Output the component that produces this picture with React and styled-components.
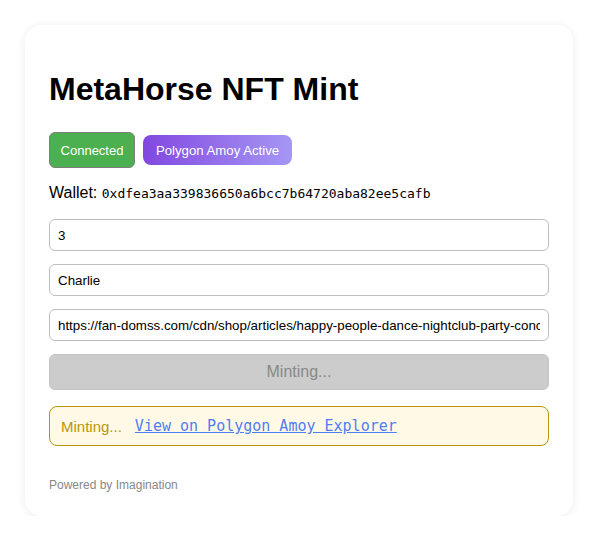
import React from "react";
import styled, { createGlobalStyle } from "styled-components";

const Global = createGlobalStyle`
  html, body { margin: 0; padding: 0; background: #ffffff; }
  body { font-family: "Liberation Sans", Arial, sans-serif; color: #000; }
  * { box-sizing: border-box; }
`;

const Page = styled.div`
  padding: 25px 0 0 25px;
`;

const Card = styled.div`
  width: 548px;
  padding: 24px;
  background: #fff;
  border-radius: 16px;
  box-shadow: 0 1px 10px rgba(0, 0, 0, 0.08);
  display: flex;
  flex-direction: column;
`;

const Title = styled.h1`
  font-size: 32px;
  font-weight: 700;
  margin: 21.5px 0 25.5px;
  line-height: 36px;
`;

const BadgeRow = styled.div`
  display: flex;
  align-items: center;
  gap: 8px;
`;

const ConnectedButton = styled.button`
  height: 36px;
  width: 86px;
  padding: 0;
  font-family: "Liberation Sans", Arial, sans-serif;
  font-size: 13px;
  color: #fff;
  background: #4caf50;
  border: 1px solid #7d7d7d;
  border-radius: 6px;
`;

const NetworkBadge = styled.span`
  display: inline-flex;
  align-items: center;
  justify-content: center;
  height: 30px;
  width: 149px;
  font-size: 13.2px;
  color: #fff;
  border-radius: 8px;
  background: linear-gradient(90deg, #8248e0 0%, #a597f5 100%);
`;

const WalletLine = styled.p`
  font-size: 16px;
  margin: 16px 0 16px;
  line-height: 18px;
`;

const Address = styled.code`
  font-family: "DejaVu Sans Mono", monospace;
  font-size: 13px;
`;

const Form = styled.div`
  display: flex;
  flex-direction: column;
  gap: 13px;
`;

const Field = styled.input`
  width: 100%;
  height: 32px;
  padding: 0 8px;
  font-family: "Liberation Sans", Arial, sans-serif;
  font-size: 13.33px;
  color: #000;
  border: 1px solid #bdbdbd;
  border-radius: 6px;
  background: #fff;
  outline: none;
`;

const MintButton = styled.button`
  width: 100%;
  height: 36px;
  font-family: "Liberation Sans", Arial, sans-serif;
  font-size: 16px;
  color: #888;
  background: #cccccc;
  border: 1px solid #c4c4c4;
  border-radius: 6px;
`;

const Status = styled.div`
  margin-top: 16px;
  height: 40px;
  display: flex;
  align-items: center;
  padding: 0 11px;
  border: 1px solid #b8960c;
  border-radius: 8px;
  background: #fff9e6;
  color: #b8960c;
  font-size: 15px;
`;

const ExplorerLink = styled.a`
  margin-left: 13px;
  font-family: "DejaVu Sans Mono", monospace;
  font-size: 15px;
  color: #4f7ef2;
  text-decoration: underline;
`;

const Footer = styled.p`
  margin: 32px 0 0;
  font-size: 12px;
  line-height: 14px;
  color: #888;
`;

export default function App() {
  return (
    <>
      <Global />
      <Page>
        <Card>
          <Title>MetaHorse NFT Mint</Title>
          <BadgeRow>
            <ConnectedButton>Connected</ConnectedButton>
            <NetworkBadge>Polygon Amoy Active</NetworkBadge>
          </BadgeRow>
          <WalletLine>
            Wallet: <Address>0xdfea3aa339836650a6bcc7b64720aba82ee5cafb</Address>
          </WalletLine>
          <Form>
            <Field defaultValue="3" />
            <Field defaultValue="Charlie" />
            <Field defaultValue="https://fan-domss.com/cdn/shop/articles/happy-people-dance-nightclub-party-concert" />
            <MintButton disabled>Minting...</MintButton>
          </Form>
          <Status>
            Minting...
            <ExplorerLink href="#">View on Polygon Amoy Explorer</ExplorerLink>
          </Status>
          <Footer>Powered by Imagination</Footer>
        </Card>
      </Page>
    </>
  );
}
